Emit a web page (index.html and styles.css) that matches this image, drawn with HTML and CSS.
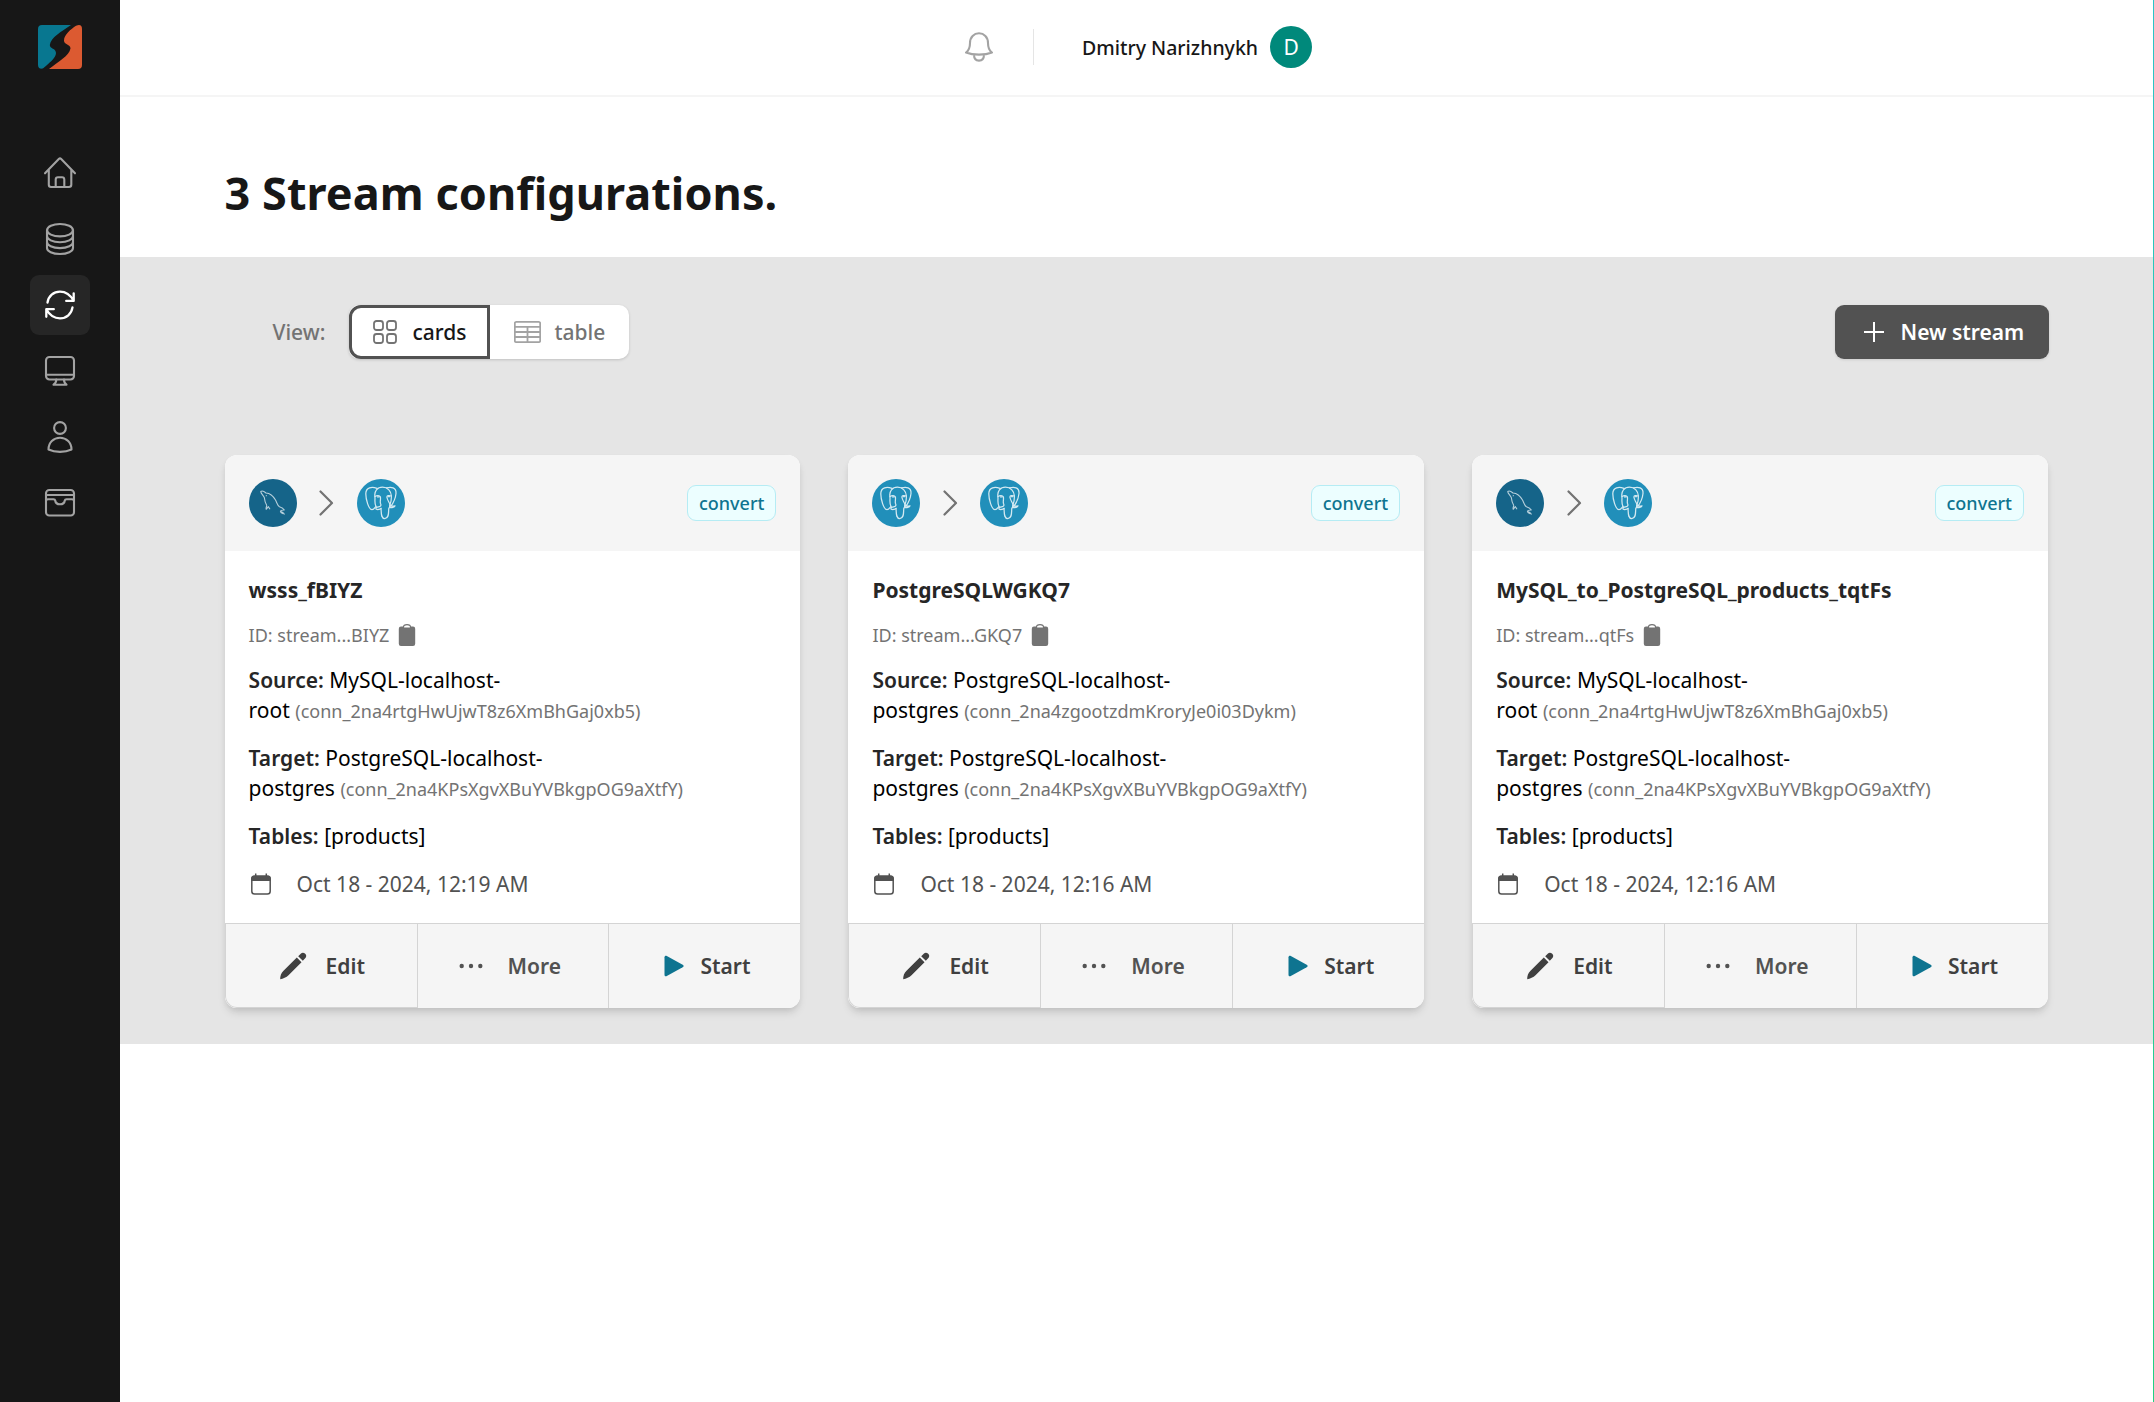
FILE: index.html
```html
<!DOCTYPE html>
<html lang="en">
<head>
<meta charset="utf-8">
<title>Streams</title>
<link rel="stylesheet" href="styles.css">
</head>
<body>
<svg width="0" height="0" class="defs">
  <symbol id="mysql" viewBox="0 0 48 48">
    <circle cx="24" cy="24" r="24" fill="#156489"/>
    <path d="M17.800 26.500C16 23.500 15.500 20.500 15.300 18.500C14.500 16.500 11.500 14 11.800 12.500C13 11.400 15.500 12.700 17 14C21 14.300 24.500 17.500 26.500 21C28 24 28.500 26.800 30.500 27.800C33 28.600 34.500 29.600 35.200 31C33.500 31.200 32 31.300 31.500 32C32.500 33 34.500 33.800 35.500 35.500M31.500 32C31.300 33 32.500 34.200 34 34.600M17.800 26.500C17.500 28 16.700 28.500 17.200 30.300L19.300 27.600L21 30.200" fill="none" stroke="#b5cfdb" stroke-width="1.100" stroke-linejoin="round"/>
    <circle cx="17.300" cy="16.700" r=".6" fill="#b5cfdb"/>
  </symbol>
  <symbol id="pg" viewBox="0 0 48 48">
    <circle cx="24" cy="24" r="24" fill="#218fba"/>
    <g fill="none" stroke="#d3e9f1" stroke-width="1.250" stroke-linejoin="round" stroke-linecap="round">
      <path d="M20 9.300C15 7.500 8.800 8 8.800 14.800C8.800 20 11.500 30.500 15 30.700C17 30.700 18 28.500 19 27.500"/>
      <path d="M19 27.500C17 24 18.500 20.500 17.800 16.500C17.500 12.500 20 8.200 25.500 8.200C31 8.200 34 12.500 34.300 16.500C34.500 20 34.500 22.500 33 25.500C32 27.500 33.500 28 31.800 29.300C31.300 33 32.500 39.500 27.800 39.500C23.500 39.500 24.500 33.500 24 29.300"/>
      <path d="M29.500 8.900C34 7.500 39.500 8.300 39 14.500C38.500 19.500 36 24.500 33.500 27.800M32.500 28.400C34.500 29 37.500 28.500 38 26.800C36.500 27.400 34 27.300 33.500 26.500"/>
      <path d="M18 17.600C20 16.300 22.500 16.500 23.300 17.800C24 20 22.800 22.500 23.500 24.500C24.500 26.500 23.500 27.500 21.500 27.800C20 28 18.500 29 19 30C20.500 31 23 30.500 24 29.300M34.200 17C32 16 29.500 16.700 30 18.500C30.300 21 32.500 23.500 33.200 26"/>
      <path d="M20.500 17.900h1.500M31.500 17.700h1"/>
    </g>
  </symbol>
  <symbol id="chev" viewBox="0 0 24 36"><path d="M5.500 6.500L17 18L5.500 29.500" fill="none" stroke="#737373" stroke-width="2.200" stroke-linecap="round" stroke-linejoin="round"/></symbol>
  <symbol id="clip" viewBox="0 0 18 24"><path d="M3 3.500H15A2.200 2.200 0 0 1 17.200 5.700V20.800A2.200 2.200 0 0 1 15 23H3A2.200 2.200 0 0 1 .8 20.800V5.700A2.200 2.200 0 0 1 3 3.500Z" fill="#737373"/><path d="M5.500 5V4C5.500 2.500 7 1.600 9 1.600S12.500 2.500 12.500 4V5Z" fill="#fff" stroke="#737373" stroke-width="1.200"/></symbol>
  <symbol id="cal" viewBox="0 0 24 24"><rect x="2.800" y="4.300" width="18.400" height="17.700" rx="2.800" fill="none" stroke="#525252" stroke-width="1.500"/><path d="M2.200 9V6.500Q2.200 3.600 5 3.600H19Q21.800 3.600 21.800 6.500V9Z" fill="#525252"/><path d="M6.700 1.400v3M17.300 1.400v3" stroke="#525252" stroke-width="1.500"/></symbol>
  <symbol id="pencil" viewBox="0 0 28 28"><path d="M17.800 5.600L22.500 10.200L9.500 23.200C7.500 25.200 4 26.700 1.200 27.300C1 24 2.300 20.800 4.500 18.700Z M19.200 4.200L22 1.500C23.300 .3 25 .6 26.200 1.800C27.500 3 27.600 4.700 26.400 6L23.800 8.800Z" fill="#404040"/></symbol>
  <symbol id="dots" viewBox="0 0 24 6"><g fill="#525252"><circle cx="2.700" cy="3" r="2.200"/><circle cx="12" cy="3" r="2.200"/><circle cx="21.300" cy="3" r="2.200"/></g></symbol>
  <symbol id="play" viewBox="0 0 20 22"><path d="M.5 2.300C.5 .9 1.700 .4 2.800 1L18.700 9.700C19.900 10.400 19.900 11.600 18.700 12.300L2.800 21C1.700 21.600 .5 21.100 .5 19.700Z" fill="#0e7490"/></symbol>
</svg>
<div class="app">
  <aside class="side">
    <svg class="logo" viewBox="0 0 44 44"><path d="M4 0H33C23 7 13 12 11.800 20C11.800 24 18 23 18 28C18 33 10 39 5.500 43C4.500 44 0 44.500 0 40V4Q0 0 4 0Z" fill="#087790"/><path d="M38 0.800Q44 -1.500 44 4V40Q44 44 40 44H11C21 36 31 31 32.500 23.500C32.500 19 26 20 26 15.500C26 10 33 4 38 .8Z" fill="#dc5a31"/></svg>
    <nav class="nav">
      <a class="item"><svg viewBox="0 0 36 36"><path d="M3 18.300L16.800 4Q18 2.800 19.200 4L33 18.300M6.800 15V29.800Q6.800 32 9 32H27Q29.300 32 29.300 29.800V15M13.700 31.800V24.500Q13.700 22.200 16 22.200H20Q22.300 22.200 22.300 24.500V31.800"/></svg></a>
      <a class="item"><svg viewBox="0 0 36 36"><ellipse cx="18" cy="9.200" rx="12.900" ry="6.200"/><path d="M5 9.200V27C5 30.300 10.500 33 18 33S31 30.300 31 27V9.200M5 15.100C5 18.300 10.500 21.200 18 21.200S31 18.300 31 15.100M5 21.100C5 24.300 10.500 27.100 18 27.100S31 24.300 31 21.100"/></svg></a>
      <a class="item active"><svg viewBox="0 0 36 36"><path d="M24.200 13.900H31.700V6.300M31.700 13.900C28.500 8 23.700 4.600 18 4.600C11.500 4.600 6.500 9 5.500 15.500M11.800 22.200H4.300V29.800M4.300 22.200C7.500 28 12.300 31.300 18 31.300C24.500 31.300 29.500 27 30.500 20.400"/></svg></a>
      <a class="item"><svg viewBox="0 0 36 36"><rect x="4" y="4" width="28" height="22.500" rx="3.500"/><path d="M4 21.700H32M14.300 26.500Q14.300 30 11.500 31.700H24.500Q22 30 22 26.500"/></svg></a>
      <a class="item"><svg viewBox="0 0 36 36"><circle cx="18" cy="9" r="5.900"/><path d="M6.500 30.500C6.500 23.500 11.500 18.800 18 18.800S29.500 23.500 29.500 30.500C23 33.600 13 33.600 6.500 30.500Z"/></svg></a>
      <a class="item"><svg viewBox="0 0 36 36"><rect x="4" y="5" width="28" height="25.500" rx="3.300"/><path d="M4 10H32M4 16Q4 14.300 6 14.300H11.500Q13 14.300 13.200 15.500C13.800 20.500 22.200 20.500 22.800 15.500Q23 14.300 24.500 14.300H30Q32 14.300 32 16"/></svg></a>
    </nav>
  </aside>
  <main class="main">
    <header class="top">
      <svg class="bell" viewBox="0 0 28 30"><path d="M1 20.500C4 18.500 5 16.500 5 11C5 5 9 1.300 14 1.300S23 5 23 11C23 16.500 24 18.500 27 20.500C20 23.300 8 23.300 1 20.500ZM9 22.500C9 26.500 11 28.600 14 28.600S19 26.500 19 22.500"/></svg>
      <span class="rule"></span>
      <span class="user">Dmitry Narizhnykh</span>
      <span class="avatar">D</span>
    </header>
    <h1 class="title">3 Stream configurations.</h1>
    <section class="band">
      <div class="tools">
        <span class="view">View:</span>
        <div class="toggle">
          <button class="seg on"><svg class="grid-ic" viewBox="0 0 24 24"><rect x="1" y="1" width="9" height="9" rx="2.500"/><rect x="14" y="1" width="9" height="9" rx="2.500"/><rect x="1" y="14" width="9" height="9" rx="2.500"/><rect x="14" y="14" width="9" height="9" rx="2.500"/></svg>cards</button>
          <button class="seg"><svg class="table-ic" viewBox="0 0 27 22"><rect x=".8" y=".8" width="25.400" height="20.400" rx="1.500"/><path d="M1 5.800H26M1 11H26M1 16H26M13.500 5.800V21"/></svg>table</button>
        </div>
        <button class="new"><svg viewBox="0 0 20 20"><path d="M10 0V20M0 10H20"/></svg>New stream</button>
      </div>
      <div class="cards">
        <article class="card">
          <div class="head"><svg class="db"><use href="#mysql"/></svg><svg class="chev"><use href="#chev"/></svg><svg class="db"><use href="#pg"/></svg><span class="badge">convert</span></div>
          <div class="body">
            <h2>wsss_fBIYZ</h2>
            <p class="id">ID: stream...BIYZ <svg><use href="#clip"/></svg></p>
            <p><b>Source:</b> MySQL-localhost-<br>root <small>(conn_2na4rtgHwUjwT8z6XmBhGaj0xb5)</small></p>
            <p><b>Target:</b> PostgreSQL-localhost-<br>postgres <small>(conn_2na4KPsXgvXBuYVBkgpOG9aXtfY)</small></p>
            <p><b>Tables:</b> [products]</p>
            <p class="date"><svg><use href="#cal"/></svg>Oct 18 - 2024, 12:19 AM</p>
          </div>
          <div class="foot"><button class="edit"><svg><use href="#pencil"/></svg>Edit</button><button class="more"><svg><use href="#dots"/></svg>More</button><button class="start"><svg><use href="#play"/></svg>Start</button></div>
        </article>
        <article class="card">
          <div class="head"><svg class="db"><use href="#pg"/></svg><svg class="chev"><use href="#chev"/></svg><svg class="db"><use href="#pg"/></svg><span class="badge">convert</span></div>
          <div class="body">
            <h2>PostgreSQLWGKQ7</h2>
            <p class="id">ID: stream...GKQ7 <svg><use href="#clip"/></svg></p>
            <p><b>Source:</b> PostgreSQL-localhost-<br>postgres <small>(conn_2na4zgootzdmKroryJe0i03Dykm)</small></p>
            <p><b>Target:</b> PostgreSQL-localhost-<br>postgres <small>(conn_2na4KPsXgvXBuYVBkgpOG9aXtfY)</small></p>
            <p><b>Tables:</b> [products]</p>
            <p class="date"><svg><use href="#cal"/></svg>Oct 18 - 2024, 12:16 AM</p>
          </div>
          <div class="foot"><button class="edit"><svg><use href="#pencil"/></svg>Edit</button><button class="more"><svg><use href="#dots"/></svg>More</button><button class="start"><svg><use href="#play"/></svg>Start</button></div>
        </article>
        <article class="card">
          <div class="head"><svg class="db"><use href="#mysql"/></svg><svg class="chev"><use href="#chev"/></svg><svg class="db"><use href="#pg"/></svg><span class="badge">convert</span></div>
          <div class="body">
            <h2>MySQL_to_PostgreSQL_products_tqtFs</h2>
            <p class="id">ID: stream...qtFs <svg><use href="#clip"/></svg></p>
            <p><b>Source:</b> MySQL-localhost-<br>root <small>(conn_2na4rtgHwUjwT8z6XmBhGaj0xb5)</small></p>
            <p><b>Target:</b> PostgreSQL-localhost-<br>postgres <small>(conn_2na4KPsXgvXBuYVBkgpOG9aXtfY)</small></p>
            <p><b>Tables:</b> [products]</p>
            <p class="date"><svg><use href="#cal"/></svg>Oct 18 - 2024, 12:16 AM</p>
          </div>
          <div class="foot"><button class="edit"><svg><use href="#pencil"/></svg>Edit</button><button class="more"><svg><use href="#dots"/></svg>More</button><button class="start"><svg><use href="#play"/></svg>Start</button></div>
        </article>
      </div>
    </section>
  </main>
  <div class="edge"></div>
</div>
</body>
</html>
```

FILE: styles.css
```css
* { box-sizing: border-box; }
body { margin: 0; background: #fff; font: 21px/30px "Noto Sans", sans-serif; color: #000; }
h1, h2, p { margin: 0; }
button { font: inherit; border: 0; padding: 0; background: none; }
svg { display: block; flex: none; }
.defs { position: absolute; }
.app { display: flex; height: 1402px; overflow: hidden; }
.side { width: 120px; background: #171717; padding-top: 25px; display: flex; flex-direction: column; align-items: center; }
.logo { width: 44px; height: 44px; }
.nav { margin-top: 74px; padding-top: .2px; display: flex; flex-direction: column; gap: 6px; }
.item { width: 60px; height: 60px; border-radius: 9px; display: flex; align-items: center; justify-content: center; }
.item svg { width: 36px; height: 36px; fill: none; stroke: #a3a3a3; stroke-width: 2.1; stroke-linejoin: round; stroke-linecap: round; }
.item.active { background: #262626; }
.item.active svg { stroke: #fff; stroke-width: 2.3; }
.main { flex: 1; }
.edge { width: 1px; background: linear-gradient(#2bc4c8, #22d082); }
.top { height: 97px; border-bottom: 2px solid #f5f5f5; display: flex; align-items: center; padding: 0 0 1px 845px; }
.bell { width: 28px; height: 30px; fill: none; stroke: #a3a3a3; stroke-width: 2.1; stroke-linejoin: round; }
.rule { width: 1px; height: 36px; background: #e5e5e5; margin-left: 40px; }
.user { margin-left: 48px; padding-top: 2px; font-size: 19.5px; font-weight: 500; color: #171717; }
.avatar { margin-left: 12px; width: 42px; height: 42px; border-radius: 50%; background: #00897b; color: #fff; font-size: 21px; line-height: 43px; text-align: center; }
.title { height: 160px; padding: 66px 0 0 104.5px; font-size: 45px; line-height: 60px; font-weight: 700; letter-spacing: .06px; color: #171717; }
.band { height: 787px; background: #e5e5e5; padding: 48px 104.5px 0; }
.tools { height: 54px; display: flex; align-items: center; padding-left: 48px; }
.view { color: #737373; width: 76.5px; font-weight: 500; }
.toggle { display: flex; border-radius: 10px; background: #fff; box-shadow: 0 1px 3px rgba(0,0,0,.16); }
.seg { height: 54px; width: 139px; display: flex; align-items: center; padding-left: 24px; color: #737373; font-weight: 500; }
.seg.on { width: 141px; padding-left: 21px; border: 3px solid #525252; border-radius: 12px 0 0 12px; color: #171717; }
.seg svg { fill: none; stroke-width: 1.8; }
.grid-ic { width: 24px; height: 24px; stroke: #737373; margin-right: 15.5px; }
.table-ic { width: 27px; height: 24px; stroke: #a3a3a3; margin-right: 13.5px; }
.new { margin-left: auto; width: 214px; height: 54px; border-radius: 9px; background: #525252; color: #fff; font-weight: 600; display: flex; align-items: center; padding-left: 29px; box-shadow: 0 1px 3px rgba(0,0,0,.1); }
.new svg { width: 20px; height: 20px; margin-right: 17px; stroke: #fff; stroke-width: 2; }
.cards { margin: 96px .5px 0 .1px; display: grid; grid-template-columns: repeat(3, 1fr); gap: 48px; }
.card { height: 553px; border-radius: 12px; overflow: hidden; background: #fff; box-shadow: 0 6px 9px -1px rgba(0,0,0,.1), 0 3px 6px -2px rgba(0,0,0,.1); display: flex; flex-direction: column; }
.head { height: 96px; background: #f5f5f5; display: flex; align-items: center; padding: 0 24px; }
.db { width: 48px; height: 48px; }
.chev { width: 24px; height: 36px; margin: 0 17.5px 0 18.5px; }
.badge { margin-left: auto; height: 36px; padding: 0 11px; border: 1.5px solid #b5ecf4; border-radius: 9px; background: #ecfeff; color: #0e7490; font-size: 18px; line-height: 34px; font-weight: 500; }
.body { flex: 1; padding: 23.5px 24px 0; }
h2 { font-size: 21px; line-height: 30px; font-weight: 700; color: #262626; }
.body p { margin-top: 18px; }
.body p.id { height: 24px; line-height: 24px; font-size: 18px; color: #737373; display: flex; align-items: center; gap: 9px; }
.id svg { width: 18px; height: 24px; }
b { font-weight: 600; color: #262626; }
small { font-size: 18px; line-height: 24px; color: #737373; }
.date { display: flex; align-items: center; color: #525252; }
.date svg { width: 24px; height: 24px; margin-right: 24px; }
.foot { height: 85px; border-top: 1px solid #d4d4d4; display: grid; grid-template-columns: repeat(3, 1fr); background: #f5f5f5; color: #404040; font-weight: 600; }
.foot button { display: flex; align-items: center; color: inherit; }
.foot button + button { border-left: 1px solid #d4d4d4; }
.foot .edit { padding-left: 53px; border-left: 1px solid #d4d4d4; border-bottom: 1px solid #d4d4d4; border-radius: 0 0 0 12px; }
.edit svg { width: 28px; height: 28px; margin-right: 19px; }
.foot .more { padding-left: 41px; color: #525252; }
.more svg { width: 24px; height: 6px; margin-right: 25px; }
.foot .start { padding-left: 55px; }
.start svg { width: 20px; height: 22px; margin-right: 16px; }
```
